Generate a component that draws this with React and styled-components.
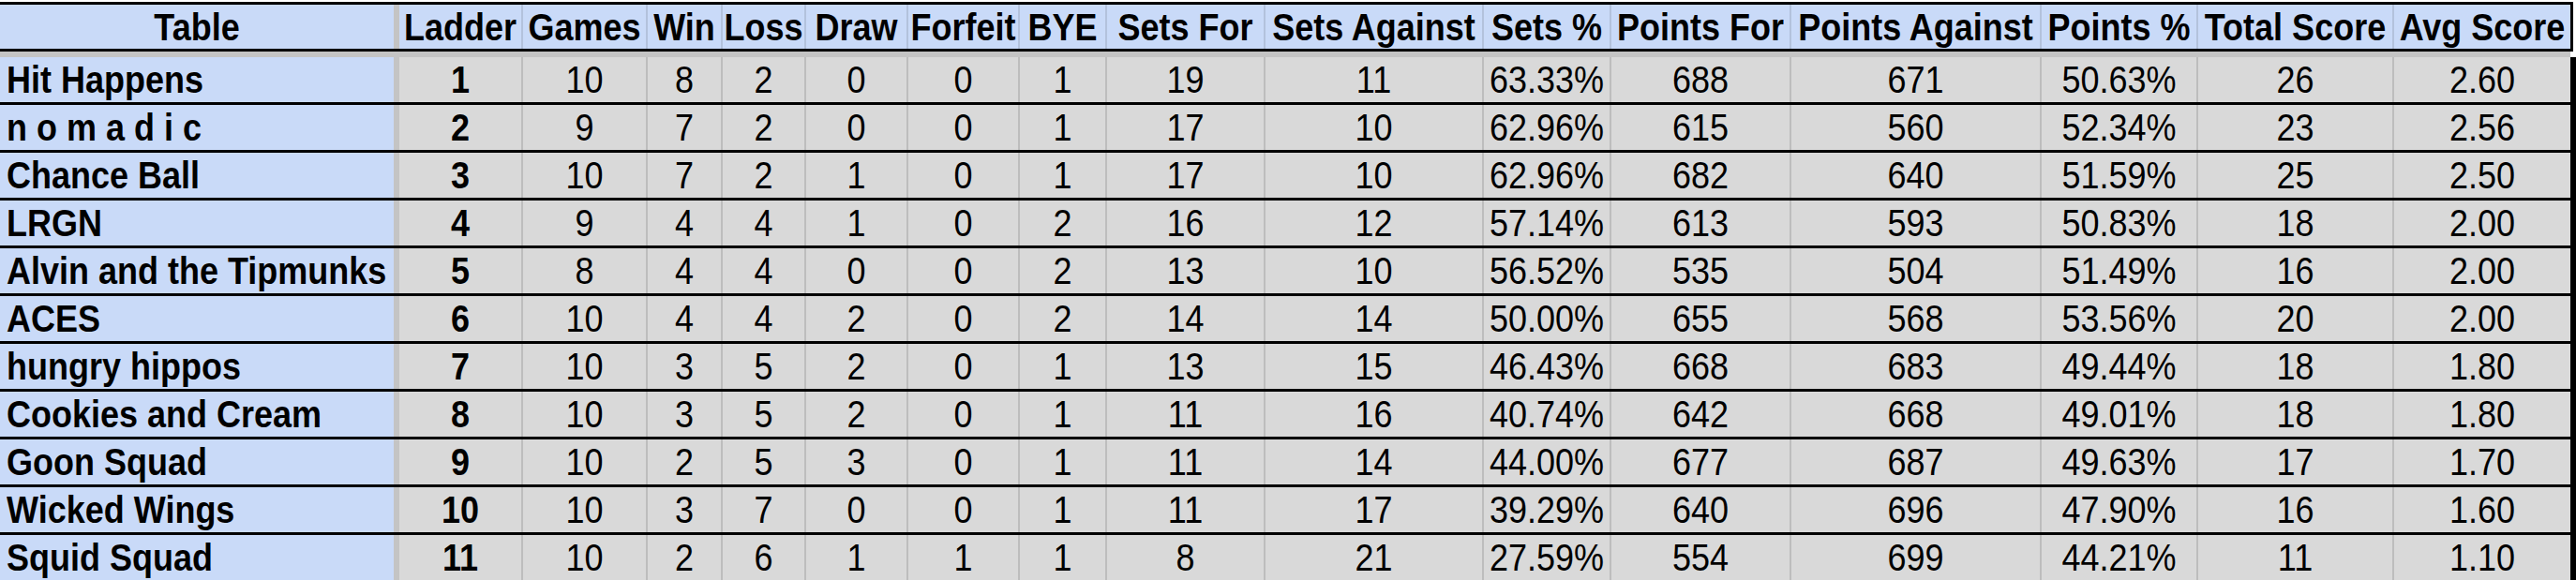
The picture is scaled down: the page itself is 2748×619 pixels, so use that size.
import styled, { createGlobalStyle } from "styled-components";

const GlobalStyle = createGlobalStyle`
	html, body {
		margin: 0;
		padding: 0;
		background: #ffffff;
	}
	body {
		font-family: "Liberation Sans", Arial, sans-serif;
		color: #000000;
	}
`;

const BLUE = "#c9daf8";
const GREY = "#d9d9d9";
const DIVIDER = "#c4c4c4";

// Widths of the stat columns, after the frozen "Table" column.
const STAT_WIDTHS = [ 132, 133, 80, 89, 109, 119, 93, 169, 233, 136, 192, 267, 167, 209, 188 ];
const TEMPLATE = `426px ${ STAT_WIDTHS.map( w => `${ w }px` ).join( " " ) }`;

const HEADINGS = [
	"Ladder", "Games", "Win", "Loss", "Draw", "Forfeit", "BYE", "Sets For", "Sets Against",
	"Sets %", "Points For", "Points Against", "Points %", "Total Score", "Avg Score",
];

const TEAMS = [
	[ "Hit Happens", 1, 10, 8, 2, 0, 0, 1, 19, 11, "63.33%", 688, 671, "50.63%", 26, "2.60" ],
	[ "n o m a d i c", 2, 9, 7, 2, 0, 0, 1, 17, 10, "62.96%", 615, 560, "52.34%", 23, "2.56" ],
	[ "Chance Ball", 3, 10, 7, 2, 1, 0, 1, 17, 10, "62.96%", 682, 640, "51.59%", 25, "2.50" ],
	[ "LRGN", 4, 9, 4, 4, 1, 0, 2, 16, 12, "57.14%", 613, 593, "50.83%", 18, "2.00" ],
	[ "Alvin and the Tipmunks", 5, 8, 4, 4, 0, 0, 2, 13, 10, "56.52%", 535, 504, "51.49%", 16, "2.00" ],
	[ "ACES", 6, 10, 4, 4, 2, 0, 2, 14, 14, "50.00%", 655, 568, "53.56%", 20, "2.00" ],
	[ "hungry hippos", 7, 10, 3, 5, 2, 0, 1, 13, 15, "46.43%", 668, 683, "49.44%", 18, "1.80" ],
	[ "Cookies and Cream", 8, 10, 3, 5, 2, 0, 1, 11, 16, "40.74%", 642, 668, "49.01%", 18, "1.80" ],
	[ "Goon Squad", 9, 10, 2, 5, 3, 0, 1, 11, 14, "44.00%", 677, 687, "49.63%", 17, "1.70" ],
	[ "Wicked Wings", 10, 10, 3, 7, 0, 0, 1, 11, 17, "39.29%", 640, 696, "47.90%", 16, "1.60" ],
	[ "Squid Squad", 11, 10, 2, 6, 1, 1, 1, 8, 21, "27.59%", 554, 699, "44.21%", 11, "1.10" ],
];

const Sheet = styled.div`
	padding-top: 2px;
	width: 2748px;
	overflow: hidden;
`;

const HeaderRow = styled.div`
	display: grid;
	grid-template-columns: ${ TEMPLATE };
	width: 2745px;
	box-sizing: border-box;
	border-top: 3px solid #000;
	border-bottom: 3px solid #000;
	border-right: 3px solid #000;
	background: ${ BLUE };
`;

const FreezeBar = styled.div`
	width: 2742px;
	height: 6px;
	background: ${ DIVIDER };
`;

const Body = styled.div`
	width: 2748px;
	box-sizing: border-box;
	border-right: 6px solid #000;
`;

const Row = styled.div`
	display: grid;
	grid-template-columns: ${ TEMPLATE };
	height: 51px;
	box-sizing: border-box;
	border-bottom: 3px solid #000;
`;

const Cell = styled.div`
	display: flex;
	align-items: center;
	justify-content: center;
	box-sizing: border-box;
	padding-top: 2px;
	font-size: 36px;
	line-height: 1;
	white-space: nowrap;
	overflow: hidden;
	font-weight: ${ p => ( p.$bold ? 700 : 400 ) };
	background: ${ GREY };
	border-right: 2px solid #bdbdbd;

	&:last-child {
		border-right: none;
	}
`;

// The sheet was captured slightly stretched, so glyphs stand a bit taller.
const Text = styled.span`
	display: inline-block;
	transform: scaleY( 1.12 );
`;

const HeadCell = styled( Cell )`
	height: 47px;
	font-weight: 700;
	background: ${ BLUE };
	border-right-color: #b3c2dc;
`;

const NameCell = styled( Cell )`
	justify-content: ${ p => ( p.$center ? "center" : "flex-start" ) };
	padding-left: ${ p => ( p.$center ? 0 : 7 ) }px;
	font-weight: 700;
	background: ${ BLUE };
	border-right: 6px solid ${ DIVIDER };
`;

/**
 * Ladder table for the league.
 *
 * @returns {JSX.Element} The element.
 */
const App = () => {
	return (
		<>
			<GlobalStyle />
			<Sheet>
				<HeaderRow>
					<NameCell as={ HeadCell } $center={ true }><Text>Table</Text></NameCell>
					{ HEADINGS.map( h => <HeadCell key={ h }><Text>{ h }</Text></HeadCell> ) }
				</HeaderRow>
				<FreezeBar />
				<Body>
					{ TEAMS.map( ( [ name, ladder, ...stats ] ) => (
						<Row key={ name }>
							<NameCell><Text>{ name }</Text></NameCell>
							<Cell $bold={ true }><Text>{ ladder }</Text></Cell>
							{ stats.map( ( value, i ) => <Cell key={ i }><Text>{ value }</Text></Cell> ) }
						</Row>
					) ) }
				</Body>
			</Sheet>
		</>
	);
};

export default App;
